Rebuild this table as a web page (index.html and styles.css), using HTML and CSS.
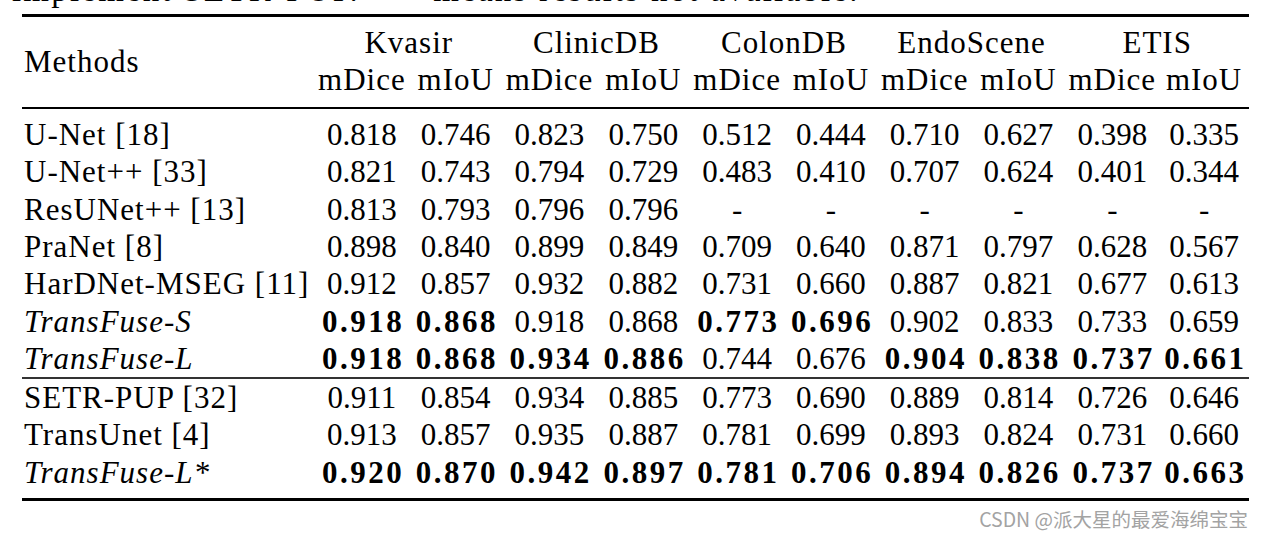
FILE: index.html
```html
<!DOCTYPE html>
<html lang="en">
<head>
<meta charset="utf-8">
<title>TransFuse results</title>
<link rel="stylesheet" href="styles.css">
</head>
<body>
<div class="page">
  <div class="caption">implement SETR-PUP. “–” means results not available.</div>
  <table class="results">
    <colgroup>
      <col class="c-method">
      <col class="c-num"><col class="c-num"><col class="c-num"><col class="c-num"><col class="c-num">
      <col class="c-num"><col class="c-num"><col class="c-num"><col class="c-num"><col class="c-last">
    </colgroup>
    <thead>
      <tr class="hr1">
        <th rowspan="2" class="method">Methods</th>
        <th colspan="2">Kvasir</th>
        <th colspan="2">ClinicDB</th>
        <th colspan="2">ColonDB</th>
        <th colspan="2">EndoScene</th>
        <th colspan="2">ETIS</th>
      </tr>
      <tr class="hr2">
        <th>mDice</th><th>mIoU</th><th>mDice</th><th>mIoU</th><th>mDice</th><th>mIoU</th><th>mDice</th><th>mIoU</th><th>mDice</th><th>mIoU</th>
      </tr>
    </thead>
    <tbody class="g1">
      <tr class="first">
        <td class="method">U-Net [18]</td>
        <td>0.818</td><td>0.746</td><td>0.823</td><td>0.750</td><td>0.512</td><td>0.444</td><td>0.710</td><td>0.627</td><td>0.398</td><td>0.335</td>
      </tr>
      <tr>
        <td class="method">U-Net++ [33]</td>
        <td>0.821</td><td>0.743</td><td>0.794</td><td>0.729</td><td>0.483</td><td>0.410</td><td>0.707</td><td>0.624</td><td>0.401</td><td>0.344</td>
      </tr>
      <tr>
        <td class="method">ResUNet++ [13]</td>
        <td>0.813</td><td>0.793</td><td>0.796</td><td>0.796</td><td>-</td><td>-</td><td>-</td><td>-</td><td>-</td><td>-</td>
      </tr>
      <tr>
        <td class="method">PraNet [8]</td>
        <td>0.898</td><td>0.840</td><td>0.899</td><td>0.849</td><td>0.709</td><td>0.640</td><td>0.871</td><td>0.797</td><td>0.628</td><td>0.567</td>
      </tr>
      <tr>
        <td class="method">HarDNet-MSEG [11]</td>
        <td>0.912</td><td>0.857</td><td>0.932</td><td>0.882</td><td>0.731</td><td>0.660</td><td>0.887</td><td>0.821</td><td>0.677</td><td>0.613</td>
      </tr>
      <tr>
        <td class="method"><i>TransFuse-S</i></td>
        <td><b class="best">0.918</b></td><td><b class="best">0.868</b></td><td>0.918</td><td>0.868</td><td><b class="best">0.773</b></td><td><b class="best">0.696</b></td><td>0.902</td><td>0.833</td><td>0.733</td><td>0.659</td>
      </tr>
      <tr class="last">
        <td class="method"><i>TransFuse-L</i></td>
        <td><b class="best">0.918</b></td><td><b class="best">0.868</b></td><td><b class="best">0.934</b></td><td><b class="best">0.886</b></td><td>0.744</td><td>0.676</td><td><b class="best">0.904</b></td><td><b class="best">0.838</b></td><td><b class="best">0.737</b></td><td><b class="best">0.661</b></td>
      </tr>
    </tbody>
    <tbody class="g2">
      <tr>
        <td class="method">SETR-PUP [32]</td>
        <td>0.911</td><td>0.854</td><td>0.934</td><td>0.885</td><td>0.773</td><td>0.690</td><td>0.889</td><td>0.814</td><td>0.726</td><td>0.646</td>
      </tr>
      <tr>
        <td class="method">TransUnet [4]</td>
        <td>0.913</td><td>0.857</td><td>0.935</td><td>0.887</td><td>0.781</td><td>0.699</td><td>0.893</td><td>0.824</td><td>0.731</td><td>0.660</td>
      </tr>
      <tr class="last">
        <td class="method"><i>TransFuse-L*</i></td>
        <td><b class="best">0.920</b></td><td><b class="best">0.870</b></td><td><b class="best">0.942</b></td><td><b class="best">0.897</b></td><td><b class="best">0.781</b></td><td><b class="best">0.706</b></td><td><b class="best">0.894</b></td><td><b class="best">0.826</b></td><td><b class="best">0.737</b></td><td><b class="best">0.663</b></td>
      </tr>
    </tbody>
  </table>
  <div class="watermark">CSDN @派大星的最爱海绵宝宝</div>
</div>
</body>
</html>
```
FILE: styles.css
```css
html, body {
  margin: 0;
  padding: 0;
  background: #ffffff;
}

.page {
  width: 1264px;
  height: 539px;
  overflow: hidden;
  padding-left: 22px;
  box-sizing: border-box;
  font-family: "Liberation Serif", "Times New Roman", serif;
  color: #000;
}

.caption {
  font-size: 33px;
  line-height: 34px;
  height: 34px;
  margin-top: -27px;
  margin-left: -10px;
  white-space: nowrap;
  letter-spacing: 2.2px;
}

.results {
  margin-top: 7px;
  width: 1227px;
  table-layout: fixed;
  border-collapse: separate;
  border-spacing: 0;
  font-size: 31px;
}

.c-method { width: 293px; }
.c-num { width: 93.8px; }
.c-last { width: 89.8px; }

.results th,
.results td {
  padding: 0;
  line-height: 37.3px;
  height: 37.3px;
  font-weight: normal;
  text-align: center;
  white-space: nowrap;
  vertical-align: middle;
}

.results th {
  letter-spacing: 1px;
}

.results .method {
  text-align: left;
  padding-left: 2px;
  letter-spacing: 1px;
}

.hr1 th {
  border-top: 3px solid #000;
  padding-top: 7px;
}

.hr1 th.method {
  border-bottom: 2px solid #000;
  padding-bottom: 8px;
}

.hr2 th {
  border-bottom: 2px solid #000;
  padding-bottom: 8px;
}

.g1 .first td {
  padding-top: 7.5px;
}

.g1 .last td {
  border-bottom: 2px solid #333;
}

.g2 .last td {
  padding-bottom: 7px;
  border-bottom: 3px solid #000;
}

.best {
  font-weight: bold;
  letter-spacing: 2.5px;
  margin-right: -2.5px;
}

.watermark {
  margin-top: 6px;
  width: 1226px;
  text-align: right;
  font-family: "Noto Sans CJK SC", "Noto Sans", sans-serif;
  font-size: 19.5px;
  line-height: 24px;
  color: #a3a3a3;
}
```
